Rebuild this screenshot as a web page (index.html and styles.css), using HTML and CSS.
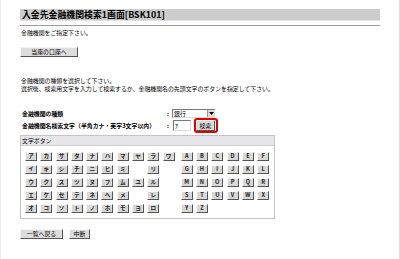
FILE: index.html
```html
<!DOCTYPE html>
<html lang="ja">
<head>
<meta charset="utf-8">
<title>入金先金融機関検索1画面</title>
<link rel="stylesheet" href="styles.css">
</head>
<body>
<div class="page">
  <div class="title">入金先金融機関検索1画面[BSK101]</div>
  <div class="rule"></div>
  <p class="msg">金融機関をご指定下さい。</p>
  <button class="btn btn-touza">当座の口座へ</button>
  <p class="msg msg-guide">金融機関の種類を選択して下さい。<br>選択後、検索用文字を入力して検索するか、金融機関名の先頭文字のボタンを指定して下さい。</p>
  <div class="row row-kind">
    <span class="label">金融機関の種類</span><span class="colon">:</span>
    <div class="select"><span class="select-text">銀行</span><span class="select-arrow"><svg width="5" height="3" viewBox="0 0 5 3"><path d="M0 0h5L2.5 3z" fill="#000"/></svg></span></div>
  </div>
  <div class="row row-search">
    <span class="label">金融機関名検索文字（半角カナ・英字3文字以内）</span><span class="colon">:</span>
    <div class="input">ｱ</div>
    <span class="mark"><button class="btn btn-search">検索</button></span>
  </div>
  <div class="keybox">
    <div class="keybox-head">文字ボタン</div>
    <div class="keybox-body">
      <div class="keys keys-kana">
        <span class="key">ア</span><span class="key">カ</span><span class="key">サ</span><span class="key">タ</span><span class="key">ナ</span><span class="key">ハ</span><span class="key">マ</span><span class="key">ヤ</span><span class="key">ラ</span><span class="key">ワ</span>
        <span class="key">イ</span><span class="key">キ</span><span class="key">シ</span><span class="key">チ</span><span class="key">ニ</span><span class="key">ヒ</span><span class="key">ミ</span><span class="blank"></span><span class="key">リ</span><span class="blank"></span>
        <span class="key">ウ</span><span class="key">ク</span><span class="key">ス</span><span class="key">ツ</span><span class="key">ヌ</span><span class="key">フ</span><span class="key">ム</span><span class="key">ユ</span><span class="key">ル</span><span class="blank"></span>
        <span class="key">エ</span><span class="key">ケ</span><span class="key">セ</span><span class="key">テ</span><span class="key">ネ</span><span class="key">ヘ</span><span class="key">メ</span><span class="blank"></span><span class="key">レ</span><span class="blank"></span>
        <span class="key">オ</span><span class="key">コ</span><span class="key">ソ</span><span class="key">ト</span><span class="key">ノ</span><span class="key">ホ</span><span class="key">モ</span><span class="key">ヨ</span><span class="key">ロ</span><span class="blank"></span>
      </div>
      <div class="keys keys-alpha">
        <span class="key">A</span><span class="key">B</span><span class="key">C</span><span class="key">D</span><span class="key">E</span><span class="key">F</span>
        <span class="key">G</span><span class="key">H</span><span class="key">I</span><span class="key">J</span><span class="key">K</span><span class="key">L</span>
        <span class="key">M</span><span class="key">N</span><span class="key">O</span><span class="key">P</span><span class="key">Q</span><span class="key">R</span>
        <span class="key">S</span><span class="key">T</span><span class="key">U</span><span class="key">V</span><span class="key">W</span><span class="key">X</span>
        <span class="key">Y</span><span class="key">Z</span>
      </div>
    </div>
  </div>
  <div class="actions">
    <button class="btn btn-back">一覧へ戻る</button>
    <button class="btn btn-stop">中断</button>
  </div>
</div>
</body>
</html>
```
FILE: styles.css
```css
* { box-sizing: border-box; }
html, body { margin: 0; padding: 0; background: #fff; }
body {
  font-family: "Noto Sans CJK JP", "Noto Sans", sans-serif;
  font-size: 5.9px;
  color: #000;
}
.page {
  width: 400px;
  min-height: 259px;
  padding: 9px 19px 0 19px;
  border-left: 1px solid #ededed;
  border-right: 1px solid #dedede;
}
.title {
  height: 12px;
  background: #cccccc;
  border-bottom: 1px solid #e2e2e2;
  font-size: 8.9px;
  font-weight: bold;
  line-height: 11px;
  padding-left: 2px;
  color: #000;
  white-space: nowrap;
}
.rule {
  margin-top: 4px;
  height: 1px;
  background: #9c9c9c;
}
.msg {
  margin: 3px 0 0 0;
  line-height: 8px;
  padding-left: 1px;
  white-space: nowrap;
}
.msg-guide { margin-top: 20px; }
.btn {
  display: inline-flex;
  align-items: center;
  justify-content: center;
  height: 10px;
  padding: 0;
  margin: 0;
  font-family: inherit;
  font-size: 5.9px;
  line-height: 1;
  color: #000;
  background: #dddcdc;
  border: 1px solid;
  border-color: #f6f6f6 #555 #555 #f6f6f6;
  border-radius: 0;
}
.btn-touza { margin-top: 10px; width: 58px; display: flex; }
.row {
  display: flex;
  align-items: center;
}
.row-kind { margin-top: 16px; height: 9px; }
.row-search { margin-top: 2px; height: 11px; }
.label {
  width: 147px;
  padding-left: 2px;
  font-weight: bold;
  white-space: nowrap;
  line-height: 9px;
  color: #000;
}
.colon {
  width: 5px;
  font-weight: bold;
  line-height: 9px;
}
.select {
  width: 43px;
  height: 9px;
  display: flex;
  background: #fff;
  border: 1px solid;
  border-color: #777 #ddd #ddd #777;
}
.select-text {
  flex: 1;
  line-height: 7px;
  padding-left: 1px;
}
.select-arrow {
  width: 7px;
  background: #dcdcdc;
  border-left: 1px solid #999;
  display: flex;
  align-items: center;
  justify-content: center;
}
.input {
  margin-left: 1px;
  width: 18px;
  height: 11px;
  background: #fff;
  border: 1px solid;
  border-color: #777 #ddd #ddd #777;
  line-height: 9px;
  padding-left: 1px;
}
.mark {
  position: relative;
  margin-left: 5px;
  display: inline-flex;
}
.mark::after {
  content: "";
  position: absolute;
  top: -2px;
  bottom: -2px;
  left: -2px;
  right: -3px;
  border: 2px solid #e20000;
  border-radius: 3px;
}
.btn-search { width: 19px; height: 11px; }
.keybox {
  margin-top: 4px;
  width: 255px;
  border: 1px solid #c4c4c4;
}
.keybox-head {
  height: 10px;
  background: #e6e5ea;
  border-bottom: 1px solid #d0d0d4;
  line-height: 9px;
  padding-left: 1px;
  color: #000;
}
.keybox-body {
  display: flex;
  gap: 6px;
  padding: 6px 4px 5px 4px;
}
.keys {
  display: grid;
  grid-template-columns: repeat(10, 12px);
  grid-auto-rows: 9px;
  column-gap: 3.3px;
  row-gap: 4px;
}
.keys-alpha { grid-template-columns: repeat(6, 12px); column-gap: 3.3px; }
.key {
  display: flex;
  align-items: center;
  justify-content: center;
  background: #d9d8d6;
  border: 1px solid;
  border-color: #fafafa #555 #555 #fafafa;
  font-size: 5.6px;
  font-weight: bold;
  line-height: 1;
  color: #222;
}
.actions {
  margin-top: 10px;
  display: flex;
  gap: 6px;
}
.btn-back { width: 43px; }
.btn-stop { width: 21px; }
```
